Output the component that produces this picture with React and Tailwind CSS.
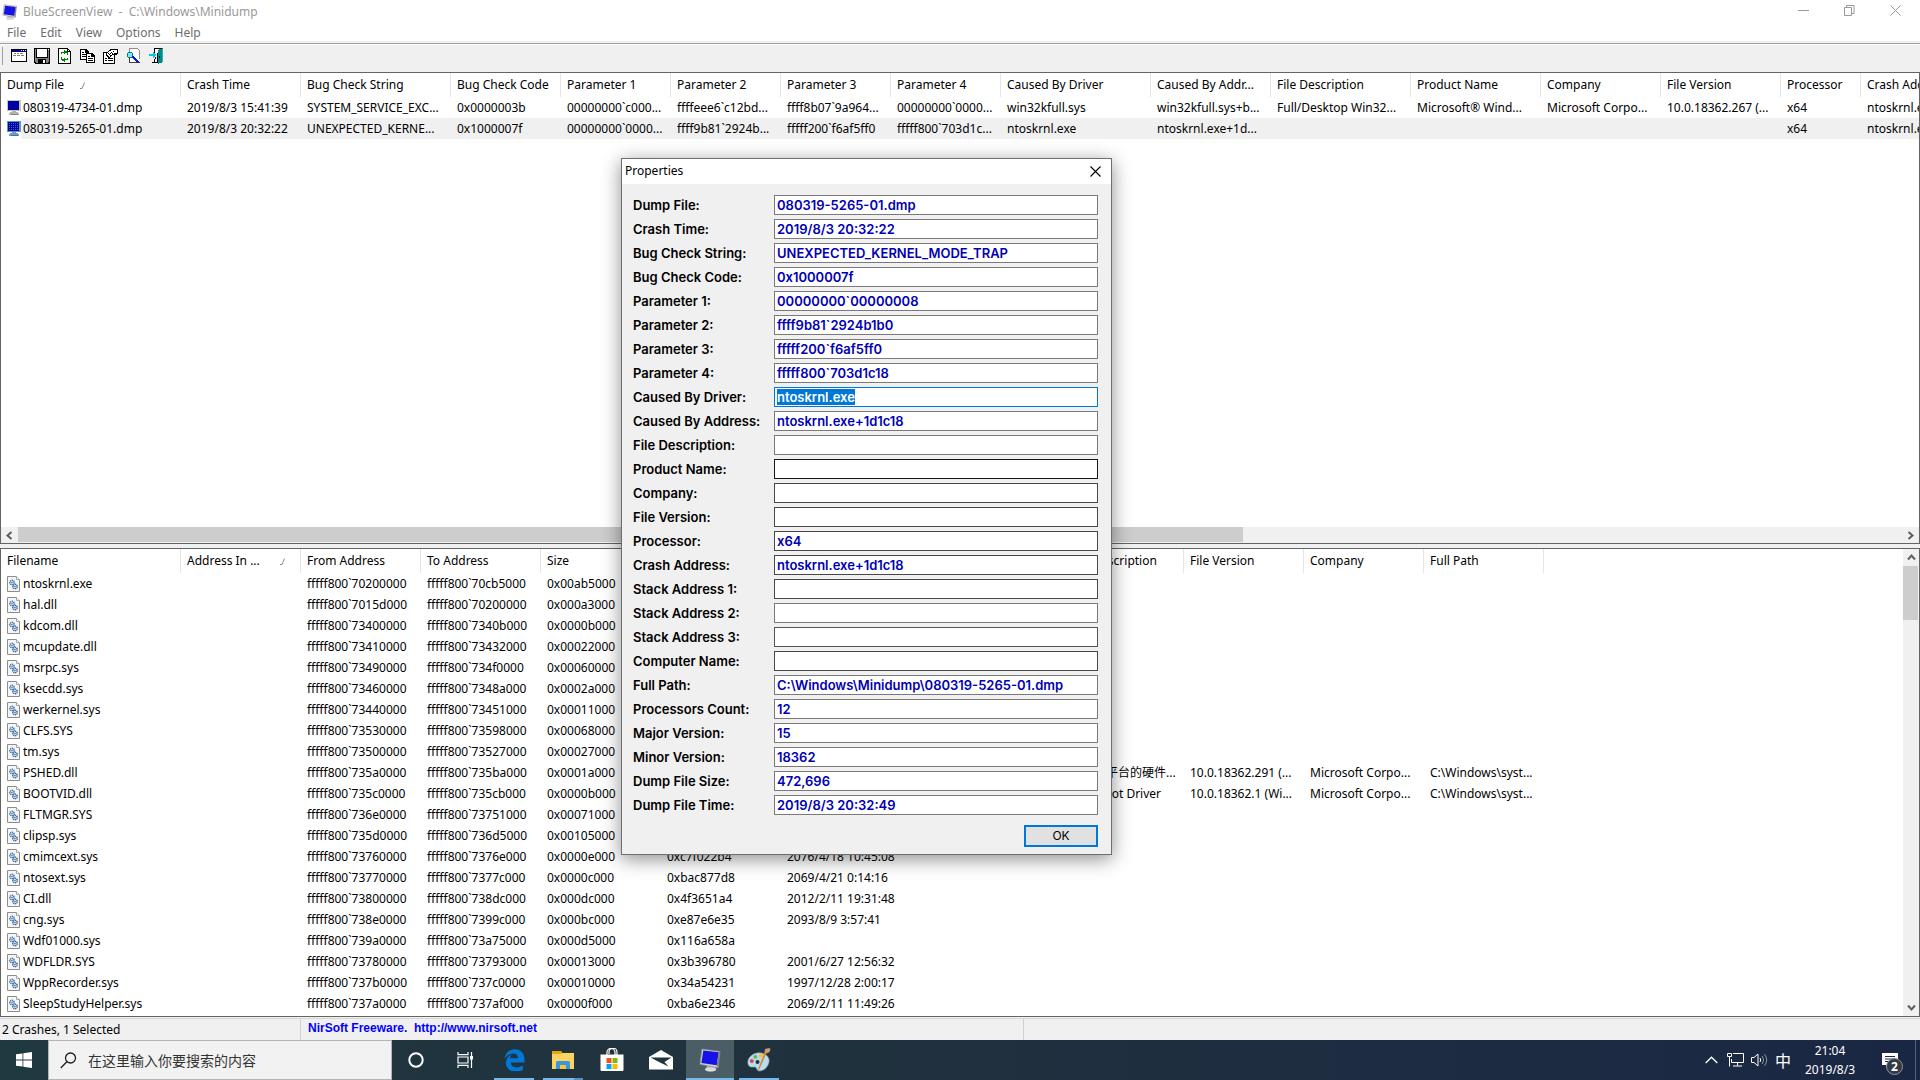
import React, { useEffect, useRef } from 'react';

const crashColumns = [
  { label: 'Dump File', width: 180, sorted: 'ml-4' },
  { label: 'Crash Time', width: 120 },
  { label: 'Bug Check String', width: 150 },
  { label: 'Bug Check Code', width: 110 },
  { label: 'Parameter 1', width: 110 },
  { label: 'Parameter 2', width: 110 },
  { label: 'Parameter 3', width: 110 },
  { label: 'Parameter 4', width: 110 },
  { label: 'Caused By Driver', width: 150 },
  { label: 'Caused By Addr...', width: 120 },
  { label: 'File Description', width: 140 },
  { label: 'Product Name', width: 130 },
  { label: 'Company', width: 120 },
  { label: 'File Version', width: 120 },
  { label: 'Processor', width: 80 },
  { label: 'Crash Address', width: 150 },
];

const crashes = [
  ['080319-4734-01.dmp', '2019/8/3 15:41:39', 'SYSTEM_SERVICE_EXC...', '0x0000003b', '00000000`c000...', 'ffffeee6`c12bd...', 'ffff8b07`9a964...', '00000000`0000...', 'win32kfull.sys', 'win32kfull.sys+b...', 'Full/Desktop Win32...', 'Microsoft® Wind...', 'Microsoft Corpo...', '10.0.18362.267 (...', 'x64', 'ntoskrnl.exe+1c...'],
  ['080319-5265-01.dmp', '2019/8/3 20:32:22', 'UNEXPECTED_KERNE...', '0x1000007f', '00000000`0000...', 'ffff9b81`2924b...', 'fffff200`f6af5ff0', 'fffff800`703d1c...', 'ntoskrnl.exe', 'ntoskrnl.exe+1d...', '', '', '', '', 'x64', 'ntoskrnl.exe+1d...'],
];

const driverColumns = [
  { label: 'Filename', width: 180 },
  { label: 'Address In ...', width: 120, sorted: 'ml-5' },
  { label: 'From Address', width: 120 },
  { label: 'To Address', width: 120 },
  { label: 'Size', width: 120 },
  { label: '', width: 120 },
  { label: '', width: 163 },
  { label: '', width: 120 },
  { label: 'File Description', width: 120 },
  { label: 'File Version', width: 120 },
  { label: 'Company', width: 120 },
  { label: 'Full Path', width: 120 },
];

const drivers = [
  ['ntoskrnl.exe', '', 'fffff800`70200000', 'fffff800`70cb5000', '0x00ab5000'],
  ['hal.dll', '', 'fffff800`7015d000', 'fffff800`70200000', '0x000a3000'],
  ['kdcom.dll', '', 'fffff800`73400000', 'fffff800`7340b000', '0x0000b000'],
  ['mcupdate.dll', '', 'fffff800`73410000', 'fffff800`73432000', '0x00022000'],
  ['msrpc.sys', '', 'fffff800`73490000', 'fffff800`734f0000', '0x00060000'],
  ['ksecdd.sys', '', 'fffff800`73460000', 'fffff800`7348a000', '0x0002a000'],
  ['werkernel.sys', '', 'fffff800`73440000', 'fffff800`73451000', '0x00011000'],
  ['CLFS.SYS', '', 'fffff800`73530000', 'fffff800`73598000', '0x00068000'],
  ['tm.sys', '', 'fffff800`73500000', 'fffff800`73527000', '0x00027000'],
  ['PSHED.dll', '', 'fffff800`735a0000', 'fffff800`735ba000', '0x0001a000', '', '', '', '特定于平台的硬件...', '10.0.18362.291 (...', 'Microsoft Corpo...', 'C:\\Windows\\syst...'],
  ['BOOTVID.dll', '', 'fffff800`735c0000', 'fffff800`735cb000', '0x0000b000', '', '', '', 'VGA Boot Driver', '10.0.18362.1 (Wi...', 'Microsoft Corpo...', 'C:\\Windows\\syst...'],
  ['FLTMGR.SYS', '', 'fffff800`736e0000', 'fffff800`73751000', '0x00071000'],
  ['clipsp.sys', '', 'fffff800`735d0000', 'fffff800`736d5000', '0x00105000'],
  ['cmimcext.sys', '', 'fffff800`73760000', 'fffff800`7376e000', '0x0000e000', '0xc7f022b4', '2076/4/18 10:45:08'],
  ['ntosext.sys', '', 'fffff800`73770000', 'fffff800`7377c000', '0x0000c000', '0xbac877d8', '2069/4/21 0:14:16'],
  ['CI.dll', '', 'fffff800`73800000', 'fffff800`738dc000', '0x000dc000', '0x4f3651a4', '2012/2/11 19:31:48'],
  ['cng.sys', '', 'fffff800`738e0000', 'fffff800`7399c000', '0x000bc000', '0xe87e6e35', '2093/8/9 3:57:41'],
  ['Wdf01000.sys', '', 'fffff800`739a0000', 'fffff800`73a75000', '0x000d5000', '0x116a658a', ''],
  ['WDFLDR.SYS', '', 'fffff800`73780000', 'fffff800`73793000', '0x00013000', '0x3b396780', '2001/6/27 12:56:32'],
  ['WppRecorder.sys', '', 'fffff800`737b0000', 'fffff800`737c0000', '0x00010000', '0x34a54231', '1997/12/28 2:00:17'],
  ['SleepStudyHelper.sys', '', 'fffff800`737a0000', 'fffff800`737af000', '0x0000f000', '0xba6e2346', '2069/2/11 11:49:26'],
];

const properties = [
  { label: 'Dump File', value: '080319-5265-01.dmp' },
  { label: 'Crash Time', value: '2019/8/3 20:32:22' },
  { label: 'Bug Check String', value: 'UNEXPECTED_KERNEL_MODE_TRAP' },
  { label: 'Bug Check Code', value: '0x1000007f' },
  { label: 'Parameter 1', value: '00000000`00000008' },
  { label: 'Parameter 2', value: 'ffff9b81`2924b1b0' },
  { label: 'Parameter 3', value: 'fffff200`f6af5ff0' },
  { label: 'Parameter 4', value: 'fffff800`703d1c18' },
  { label: 'Caused By Driver', value: 'ntoskrnl.exe', selected: true },
  { label: 'Caused By Address', value: 'ntoskrnl.exe+1d1c18' },
  { label: 'File Description', value: '' },
  { label: 'Product Name', value: '', border: 'border-[#171717]' },
  { label: 'Company', value: '', border: 'border-[#484848]' },
  { label: 'File Version', value: '', border: 'border-[#484848]' },
  { label: 'Processor', value: 'x64', border: 'border-[#484848]' },
  { label: 'Crash Address', value: 'ntoskrnl.exe+1d1c18', border: 'border-[#484848]' },
  { label: 'Stack Address 1', value: '', border: 'border-[#484848]' },
  { label: 'Stack Address 2', value: '' },
  { label: 'Stack Address 3', value: '', border: 'border-[#555555]' },
  { label: 'Computer Name', value: '', border: 'border-[#484848]' },
  { label: 'Full Path', value: 'C:\\Windows\\Minidump\\080319-5265-01.dmp' },
  { label: 'Processors Count', value: '12' },
  { label: 'Major Version', value: '15' },
  { label: 'Minor Version', value: '18362' },
  { label: 'Dump File Size', value: '472,696' },
  { label: 'Dump File Time', value: '2019/8/3 20:32:49' },
];

// Tilted monitor, used by the title bar and the taskbar
const AppIcon = ({ className }) => (
  <svg className={className} viewBox="0 0 24 26" aria-hidden="true">
    <path d="M7 21l2-3h7l2 4c-2 2.500-9 3-11 1z" fill="#b9b9b9" />
    <path d="M6 22c2-2 10-2 12 0 0 3-11 3.500-12 0z" fill="#dcdcdc" />
    <path d="M3 1l19 2.500-2 17L1 17z" fill="#d2d2d2" stroke="#8d8d8d" strokeWidth=".7" />
    <path d="M4.500 2.500l16 2-2 13.500L2.500 15.500z" fill="#1414e6" />
    <path d="M20.500 4.500l1.500-1-2 17-1.500-2.500z" fill="#7a7a7a" />
  </svg>
);

const MonitorIcon = ({ dithered }) => (
  <svg width="14" height="15" viewBox="0 0 14 15" shapeRendering="crispEdges" aria-hidden="true">
    <rect width="14" height="11" fill={dithered ? '#5f97c9' : '#c6c3bd'} />
    <rect x="1" y="1" width="11" height="9" fill="#0000a0" />
    <path d="M5 11h4v1H5zM3 12h8v1H3zM2 13h10v2H2z" fill={dithered ? '#6d9cc4' : '#b5b2aa'} />
    <path d="M4 14h7v1H4z" fill={dithered ? '#3d78b3' : '#8a8880'} />
    {dithered && (
      <path
        d="M2 2h1v1H2zM4 2h1v1H4zM6 2h1v1H6zM8 2h1v1H8zM10 2h1v1h-1zM2 4h1v1H2zM4 4h1v1H4zM6 4h1v1H6zM8 4h1v1H8zM10 4h1v1h-1zM2 6h1v1H2zM4 6h1v1H4zM6 6h1v1H6zM8 6h1v1H8zM10 6h1v1h-1zM2 8h1v1H2zM4 8h1v1H4zM6 8h1v1H6zM8 8h1v1H8zM10 8h1v1h-1z"
        fill="#1f6fd0"
      />
    )}
  </svg>
);

const SystemFileIcon = () => (
  <svg width="13" height="16" viewBox="0 0 13 16" aria-hidden="true">
    <path d="M.5.5h9l3 3v12H.5z" fill="#f6f6f6" stroke="#8c8c8c" />
    <path d="M9.500.5v3h3" fill="#fff" stroke="#a5a5a5" />
    <circle cx="5" cy="6.500" r="2.200" fill="#dbe9f5" stroke="#3c6fa5" strokeWidth="1.400" strokeDasharray="1.200 .6" />
    <circle cx="8" cy="10.500" r="2.200" fill="#dbe9f5" stroke="#2f5f96" strokeWidth="1.400" strokeDasharray="1.200 .6" />
    <circle cx="5" cy="6.500" r=".7" fill="#2f5f96" />
    <circle cx="8" cy="10.500" r=".7" fill="#2f5f96" />
  </svg>
);

const tools = [
  {
    label: 'Advanced Options',
    icon: (
      <>
        <rect x="0" y="1" width="16" height="13" fill="#000" />
        <rect x="1" y="2" width="14" height="11" fill="#fff" />
        <rect x="1" y="2" width="14" height="2" fill="#000080" />
        <path d="M10 2h1v1h-1zM12 2h1v1h-1zM14 2h1v1h-1z" fill="#fff" />
        <path d="M3 5h2v1H3zM6 5h2v1H6zM9 5h3v1H9zM2 7h3v1H2zM6 7h3v1H6zM10 7h3v1h-3z" fill="#808080" />
      </>
    ),
  },
  {
    label: 'Save Selected Items',
    icon: (
      <>
        <path d="M0 0h16v16H1v-1H0z" fill="#000" />
        <path d="M1 1h1v13H1zM14 2h1v12h-1z" fill="#808080" />
        <rect x="3" y="1" width="10" height="8" fill="#fff" />
        <path d="M2 10h12v5H2z" fill="#808080" />
        <path d="M4 11h8v4H4z" fill="#000" />
        <path d="M9 12h2v3H9z" fill="#fff" />
        <path d="M14 1h1v1h-1z" fill="#fff" />
      </>
    ),
  },
  {
    label: 'Refresh',
    icon: (
      <>
        <path d="M1 0h9l4 4v12H1z" fill="#000" />
        <path d="M2 1h8v3h3v11H2z" fill="#fff" />
        <path d="M11 2v1h1z" fill="#fff" />
        <path d="M7 2h1v1h2v1h1v3h-1V5H8v1H7V5H6V4h1zM4 4h1v2H4zM7 14v-1H5v-1H4V9h1v2h2v-1h1v1h1v1H8v2zM10 10h1v2h-1zM5 4h2v1H5zM8 11h2v1H8z" fill="#008000" />
      </>
    ),
  },
  {
    label: 'Copy Selected Items',
    icon: (
      <>
        <path d="M0 1h6l3 3v8H0z" fill="#000" />
        <path d="M1 2h4v3h3v6H1z" fill="#fff" />
        <path d="M2 4h2v1H2zM2 6h5v1H2zM2 8h5v1H2z" fill="#000" />
        <path d="M6 5h6l3 3v7H6z" fill="#000" />
        <path d="M7 6h4v3h3v5H7z" fill="#fff" />
        <path d="M8 8h2v1H8zM8 10h5v1H8zM8 12h5v1H8z" fill="#000" />
      </>
    ),
  },
  {
    label: 'Properties',
    icon: (
      <>
        <rect x="0" y="4" width="12" height="12" fill="#000" />
        <rect x="1" y="5" width="10" height="10" fill="#fff" />
        <path d="M2 10h2v1H2zM5 10h5v1H5zM2 12h2v1H2zM5 12h5v1H5z" fill="#000" />
        <path d="M3 5l5-4h7v5l-2 1h-3l-4 3-3-2z" fill="#000" />
        <path d="M4 5l5-3h5v3h-2l-2 1-4 3-1-1z" fill="#fff" />
        <path d="M5 5h1v1H5zM7 5h1v1H7zM6 6h1v1H6zM8 4h1v1H8zM10 3h1v1h-1zM9 5h1v1H9zM7 7h1v1H7z" fill="#000" />
      </>
    ),
  },
  {
    label: 'Find',
    icon: (
      <>
        <path d="M3 0h9l2 3v12H3z" fill="#fff" />
        <path d="M3 0h9v1H3zM3 1h1v3H3zM12 1h1v1h-1zM13 2h1v9h-1z" fill="#909090" />
        <path d="M3 14h11v1H3zM3 10h1v4H3z" fill="#404040" />
        <path d="M2 4h4v1H2zM1 5h1v4H1zM2 9h4v1H2zM6 5h1v4H6z" fill="#008080" />
        <rect x="2" y="5" width="4" height="4" fill="#7fe5ff" />
        <path d="M6 8h2v1h1v1h1v1h1v1h1v1h1v2h-2v-1h-1v-1H9v-1H8v-1H7v-1H6z" fill="#0020c0" />
      </>
    ),
  },
  {
    label: 'Exit',
    icon: (
      <>
        <path d="M5 0h9v1H5zM5 1h1v4H5zM6 14h4v1H6z" fill="#000" />
        <path d="M6 1h3v4H6z" fill="#fff" />
        <path d="M9 2l5-2v14l-5 2z" fill="#008b8b" />
        <path d="M13 1h1v13h-1z" fill="#22b5b5" />
        <path d="M10 8h1v2h-1z" fill="#000" />
        <path d="M0 6h4V4l4 3-4 3V8H0z" fill="#00c8e8" />
        <path d="M5 11h1v1H5zM3 14h3v1H3zM6 9h1v2H6zM5 12h1v2H5zM8 5h1v9H8z" fill="#000" />
      </>
    ),
  },
];

const Chevron = ({ className }) => (
  <svg className={className} width="9" height="9" viewBox="0 0 9 9" fill="none" stroke="#606060" strokeWidth="2" aria-hidden="true">
    <path d="M1 6.500l3.500-4 3.500 4" />
  </svg>
);

const DataTable = ({ columns, rows, icon, selectedRow, label, className }) => (
  <table aria-label={label} className={`table-fixed border-separate border-spacing-0 text-left whitespace-nowrap ${className}`}>
    <colgroup>
      {columns.map((column, i) => (
        <col key={i} style={{ width: column.width }} />
      ))}
    </colgroup>
    <thead>
      <tr className="h-6">
        {columns.map((column, i) => (
          <th key={i} scope="col" className="border-r border-[#e5e5e5] py-0 pr-[5px] pl-[6px] font-normal">
            {column.label}
            {column.sorted && (
              <svg className={`inline ${column.sorted}`} width="6" height="7" viewBox="0 0 6 7" fill="none" stroke="#8a8a8a" aria-hidden="true">
                <path d="M0 6.500h2l2.500-6" />
              </svg>
            )}
          </th>
        ))}
      </tr>
    </thead>
    <tbody>
      {rows.map((row, index) => (
        <tr key={row[0]} className={index === selectedRow ? 'h-[21px] bg-[#f0f0f0]' : 'h-[21px]'}>
          {columns.map((column, i) =>
            i === 0 ? (
              <td key={i} className="p-0">
                <div className="flex h-[21px] items-center">
                  <span className="flex h-full w-5 shrink-0 items-center bg-white pl-[6px]">{icon(index)}</span>
                  <span className="pl-[2px]">{row[0]}</span>
                </div>
              </td>
            ) : (
              <td key={i} className="px-[6px] py-0">{row[i]}</td>
            )
          )}
        </tr>
      ))}
    </tbody>
  </table>
);

const PropertiesDialog = () => {
  const selectedRef = useRef(null);

  useEffect(() => {
    selectedRef.current.focus();
    selectedRef.current.select();
  }, []);

  return (
    <div
      role="dialog"
      aria-labelledby="properties-title"
      className="absolute top-[158px] left-[621px] w-[491px] border border-[#6e6e6e] bg-[#f0f0f0] shadow-[0_4px_18px_rgba(0,0,0,0.45)]"
    >
      <div className="flex h-[25px] items-center justify-between bg-white pb-px pl-[3px]">
        <h2 id="properties-title">Properties</h2>
        <button type="button" aria-label="Close" className="flex h-full w-[31px] items-center justify-center">
          <svg width="11" height="11" viewBox="0 0 11 11" stroke="#000" strokeWidth="1.100" aria-hidden="true">
            <path d="M.5.5l10 10M10.500.5l-10 10" />
          </svg>
        </button>
      </div>
      <form className="flex flex-col gap-1 pt-[11px] pr-[13px] pb-[7px] pl-[11px] font-['Inter',sans-serif] text-[13px] font-semibold" onSubmit={(e) => e.preventDefault()}>
        {properties.map((property) => {
          const id = property.label.toLowerCase().replaceAll(' ', '-');
          return (
            <div key={id} className="flex h-5 items-center">
              <label htmlFor={id} className="w-[141px] shrink-0 pt-px whitespace-nowrap">{property.label}:</label>
              <input
                id={id}
                ref={property.selected ? selectedRef : null}
                readOnly
                defaultValue={property.value}
                className={`h-5 min-w-0 flex-1 border bg-white px-[2px] text-[#0000b4] outline-none selection:bg-[#0078d7] selection:text-white focus:border-[#0078d7] ${property.border || 'border-[#7a7a7a]'}`}
              />
            </div>
          );
        })}
        <button type="submit" className="mt-[6px] h-[22px] w-[74px] self-end border-2 border-[#0078d7] bg-[#e1e1e1] text-xs font-normal">
          OK
        </button>
      </form>
    </div>
  );
};

const TaskButton = ({ label, children, className = '', bar }) => (
  <button type="button" aria-label={label} className={`relative flex h-10 w-12 items-center justify-center ${className}`}>
    {children}
    {bar && <span className={`absolute bottom-0 h-[2px] bg-[#76b9ed] ${bar}`} />}
  </button>
);

const Taskbar = () => (
  <footer className="flex h-10 shrink-0 bg-linear-to-r from-[#20383f] via-[#20303e] to-[#1a2744] text-white">
    <button type="button" aria-label="Start" className="flex w-12 items-center justify-center">
      <svg width="16" height="16" viewBox="0 0 16 16" fill="#fff" aria-hidden="true">
        <path d="M0 2.300L6.500 1.400v6.200H0zM7.300 1.300L16 0v7.600H7.300zM0 8.400h6.500v6.200L0 13.700zM7.300 8.400H16V16l-8.700-1.300z" />
      </svg>
    </button>
    <label className="flex w-[344px] items-center border border-[#b4b4b4] bg-[#f2f2f2] pl-[11px]">
      <svg width="17" height="17" viewBox="0 0 17 17" fill="none" stroke="#1f1f1f" strokeWidth="1.300" aria-hidden="true">
        <circle cx="10.500" cy="6" r="5" />
        <path d="M7 9.500L.8 16" />
      </svg>
      <input
        aria-label="Search"
        placeholder="在这里输入你要搜索的内容"
        className="ml-[11px] min-w-0 flex-1 bg-transparent font-['Noto_Sans_CJK_SC',sans-serif] text-sm outline-none placeholder:text-[#333333]"
      />
    </label>
    <div className="flex gap-px">
      <TaskButton label="Cortana">
        <svg width="16" height="16" viewBox="0 0 16 16" fill="none" stroke="#fff" strokeWidth="2" aria-hidden="true">
          <circle cx="8" cy="8" r="6.700" />
        </svg>
      </TaskButton>
      <TaskButton label="Task View">
        <svg width="17" height="16" viewBox="0 0 17 16" fill="none" stroke="#fff" strokeWidth="1.200" aria-hidden="true">
          <path d="M1 0v2.600h10V0M1 5h10v6H1zM1 16v-2.600h10V16M14.500 0v16" />
          <path d="M13 4h3v3.500h-3z" fill="#fff" stroke="none" />
        </svg>
      </TaskButton>
      <TaskButton label="Microsoft Edge" bar="inset-x-1">
        <svg width="21" height="22" viewBox="0 0 21 22" fill="#0078d7" aria-hidden="true">
          <path d="M.5 10C1.300 4.400 5 .2 10.900.2c3.600 0 6.400 1.600 8.100 4.500 1.200 2.100 1.500 4.300 1.500 6.800v2.100H6.900c.1 6 8 5.700 12 3v4.400c-2.300 1.400-7.600 2.400-11.700.9-3.500-1.300-5.300-4.700-5.300-8.100C1.900 10 4 7.100 7.400 5.700c-.7.900-1.200 2-1.400 3.500h7.900s.5-4.600-4.400-4.600C5 4.700 2.400 7 .5 10z" />
        </svg>
      </TaskButton>
      <TaskButton label="File Explorer" bar="left-1 w-[31px]">
        <svg width="22" height="19" viewBox="0 0 22 19" aria-hidden="true">
          <path d="M0 0h9l1 2h12v16H0z" fill="#fcd462" />
          <path d="M0 0h9l1 2-1 1H0z" fill="#e8a417" />
          <path d="M4 11.500q0-1.500 1.500-1.500h11q1.500 0 1.500 1.500V18h-4v-4H8v4H4z" fill="#3b97dc" />
          <path d="M8 14h6v4H8z" fill="#f6c33d" />
        </svg>
        <span className="absolute right-1 bottom-0 h-[2px] w-[9px] bg-[#5990bd]" />
      </TaskButton>
      <TaskButton label="Microsoft Store">
        <svg width="24" height="24" viewBox="0 0 24 24" aria-hidden="true">
          <path d="M7 7V5a4 4 0 0 1 8-1v3M9 6V4a4 4 0 0 1 8 0v3" fill="none" stroke="#fff" strokeWidth="1.200" />
          <path d="M.5 6.500h23V22q0 1-1 1h-21q-1 0-1-1z" fill="#fff" />
          <path d="M6.500 10h5v5h-5z" fill="#f25022" />
          <path d="M12.500 10h5v5h-5z" fill="#7fba00" />
          <path d="M6.500 16h5v5h-5z" fill="#00a4ef" />
          <path d="M12.500 16h5v5h-5z" fill="#ffb900" />
        </svg>
      </TaskButton>
      <TaskButton label="Mail">
        <svg width="24" height="20" viewBox="0 0 24 20" aria-hidden="true">
          <path d="M0 7l12-7 12 7v12.500H0z" fill="#fff" />
          <path d="M1.500 7.500h21L15.500 12l4 4.500L11 12.500z" fill="#20343f" />
        </svg>
      </TaskButton>
      <TaskButton label="BlueScreenView" className="bg-[#4b5d65]" bar="inset-x-0">
        <AppIcon className="h-[25px] w-[23px]" />
      </TaskButton>
      <TaskButton label="Paint" bar="inset-x-1">
        <svg width="24" height="24" viewBox="0 0 24 24" aria-hidden="true">
          <path d="M10 5C4 6 0 11 1 16c1 4 5 3 7 3s1 3 4 4c5 0 9-4 10-9 1-6-5-10-12-9z" fill="#b9dcef" stroke="#7aa9c6" strokeWidth=".6" />
          <circle cx="4.800" cy="13" r="1.900" fill="#dd4433" />
          <circle cx="8.300" cy="8.800" r="1.900" fill="#6cb443" />
          <circle cx="14" cy="7.500" r="1.900" fill="#f2c037" />
          <circle cx="10.500" cy="14" r="2" fill="#1f3640" />
          <path d="M20 4L12.500 21l-1.500 2.500.5-3.500L18 3z" fill="#d98832" />
          <path d="M17.500 3.500l.5-2.500 4-1 1.500 1-1 3-2.500 1.500z" fill="#c99a6b" />
        </svg>
      </TaskButton>
    </div>
    <div className="ml-auto flex items-center pr-1">
      <button type="button" aria-label="Show hidden icons" className="flex w-6 justify-center">
        <svg width="13" height="8" viewBox="0 0 13 8" fill="none" stroke="#fff" strokeWidth="1.300" aria-hidden="true">
          <path d="M.7 7l5.800-5.800L12.300 7" />
        </svg>
      </button>
      <button type="button" aria-label="Network" className="flex w-6 justify-center">
        <svg width="17" height="14" viewBox="0 0 17 14" fill="none" stroke="#fff" aria-hidden="true">
          <path d="M6 .5h10.500v9H4.500V6M10.500 9.500v3M6 13h9M.5.5h4v3h-4zM2.500 3.500v10" />
        </svg>
      </button>
      <button type="button" aria-label="Volume" className="flex w-6 justify-center">
        <svg width="17" height="14" viewBox="0 0 17 14" fill="none" stroke="#fff" aria-hidden="true">
          <path d="M.5 4.500h2.500l4-3.500v12L3 9.500H.5z" />
          <path d="M9 5q1.500 2 0 4" />
          <path d="M11.200 3q3 4 0 8M13.500 1.200q4.500 5.800 0 11.600" stroke="#8b95a3" />
        </svg>
      </button>
      <button type="button" className="w-6 font-['Noto_Sans_CJK_SC',sans-serif] text-base">中</button>
      <div className="w-[70px] text-center text-xs leading-[19px]">
        <div>21:04</div>
        <div>2019/8/3</div>
      </div>
      <button type="button" aria-label="Notifications" className="relative flex h-10 w-[50px] items-center justify-center pr-px">
        <svg width="16" height="15" viewBox="0 0 16 15" aria-hidden="true">
          <path d="M0 0h16v12H7l-3 3v-3H0z" fill="#fff" />
          <path d="M3 3.500h10M3 6h10M3 8.500h7" stroke="#1b2742" />
        </svg>
        <span className="absolute right-3 bottom-[5px] flex size-[17px] items-center justify-center rounded-full border border-[#8e959e] bg-[#343a44] text-xs font-bold">
          2
        </span>
      </button>
      <span className="h-10 w-px bg-[#56607a]" />
    </div>
  </footer>
);

const App = () => {
  return (
    <div className="relative flex h-screen flex-col overflow-hidden bg-[#f0f0f0] font-['Noto_Sans','Noto_Sans_CJK_SC',sans-serif] text-xs text-black">
      <header className="bg-white text-[#999999]">
        <div className="flex h-6 items-center pr-[2px]">
          <AppIcon className="ml-[2px] h-[17px] w-4" />
          <h1 className="pl-[5px] whitespace-pre">BlueScreenView  -  C:\Windows\Minidump</h1>
          <div className="ml-auto flex self-start">
            <button type="button" aria-label="Minimize" className="flex h-5 w-[46px] items-center justify-center">
              <svg width="11" height="11" viewBox="0 0 11 11" stroke="#999" aria-hidden="true">
                <path d="M0 5.500h11" />
              </svg>
            </button>
            <button type="button" aria-label="Restore" className="flex h-5 w-[46px] items-center justify-center">
              <svg width="11" height="11" viewBox="0 0 11 11" fill="none" stroke="#999" aria-hidden="true">
                <path d="M.5 2.500h7v8h-7zM2.500 2.500v-2h7.500v8H7.500" />
              </svg>
            </button>
            <button type="button" aria-label="Close window" className="flex h-5 w-[46px] items-center justify-center">
              <svg width="11" height="11" viewBox="0 0 11 11" stroke="#999" aria-hidden="true">
                <path d="M.5.5l10 10M10.500.5l-10 10" />
              </svg>
            </button>
          </div>
        </div>
        <nav className="flex h-[17px] items-center text-[#6d6d6d]">
          {['File', 'Edit', 'View', 'Options', 'Help'].map((item) => (
            <button key={item} type="button" className="px-[7px]">{item}</button>
          ))}
        </nav>
      </header>

      <div className="pt-[2px]">
        <div className="border-t border-[#a0a0a0]">
          <div className="flex h-7 items-center gap-[7px] border-t border-white pb-[5px] pl-[2px]">
            <span className="mr-px h-[18px] w-px bg-[#a0a0a0]" />
            {tools.map((tool) => (
              <button key={tool.label} type="button" aria-label={tool.label}>
                <svg width="16" height="16" viewBox="0 0 16 16" shapeRendering="crispEdges" aria-hidden="true">
                  {tool.icon}
                </svg>
              </button>
            ))}
          </div>
        </div>
      </div>

      <main className="flex min-h-0 flex-1 flex-col gap-1">
        <section className="flex min-h-0 flex-[472] flex-col border border-[#646464] bg-white">
          <div className="min-h-0 flex-1 overflow-hidden">
            <DataTable
              label="Crashes"
              columns={crashColumns}
              rows={crashes}
              selectedRow={1}
              icon={(index) => <MonitorIcon dithered={index === 1} />}
              className="w-[2010px]"
            />
          </div>
          <div className="flex h-4 bg-[#f0f0f0]">
            <button type="button" aria-label="Scroll left" className="flex w-[17px] items-center justify-center">
              <Chevron className="-rotate-90" />
            </button>
            <div className="flex-1">
              <div className="h-[15px] w-[65%] bg-[#cdcdcd]" />
            </div>
            <button type="button" aria-label="Scroll right" className="flex w-[17px] items-center justify-center">
              <Chevron className="rotate-90" />
            </button>
          </div>
        </section>

        <section className="flex min-h-0 flex-[469] border border-[#646464] bg-white">
          <div className="min-w-0 flex-1 overflow-hidden">
            <DataTable
              label="Drivers"
              columns={driverColumns}
              rows={drivers}
              icon={() => <SystemFileIcon />}
              className="w-[1543px]"
            />
          </div>
          <div className="flex w-4 flex-col bg-[#f0f0f0]">
            <button type="button" aria-label="Scroll up" className="flex h-[17px] items-center justify-center">
              <Chevron />
            </button>
            <div className="flex-1">
              <div className="h-[54px] w-[15px] bg-[#cdcdcd]" />
            </div>
            <button type="button" aria-label="Scroll down" className="flex h-[17px] items-center justify-center">
              <Chevron className="rotate-180" />
            </button>
          </div>
        </section>
      </main>

      <div className="pt-px">
        <div className="flex h-[22px] border-t border-[#d7d7d7]">
          <div className="w-[301px] border-r border-[#d0d0d0] pl-[2px] leading-[22px]">2 Crashes, 1 Selected</div>
          <div className="w-[723px] border-r border-[#d0d0d0] pl-[7px]">
            <a href="http://www.nirsoft.net" className="font-['Liberation_Sans',Arial,sans-serif] text-xs leading-[19px] font-bold whitespace-pre text-[#0000ff]">
              NirSoft Freeware.  http://www.nirsoft.net
            </a>
          </div>
        </div>
      </div>

      <Taskbar />
      <PropertiesDialog />
    </div>
  );
};

export default App;
